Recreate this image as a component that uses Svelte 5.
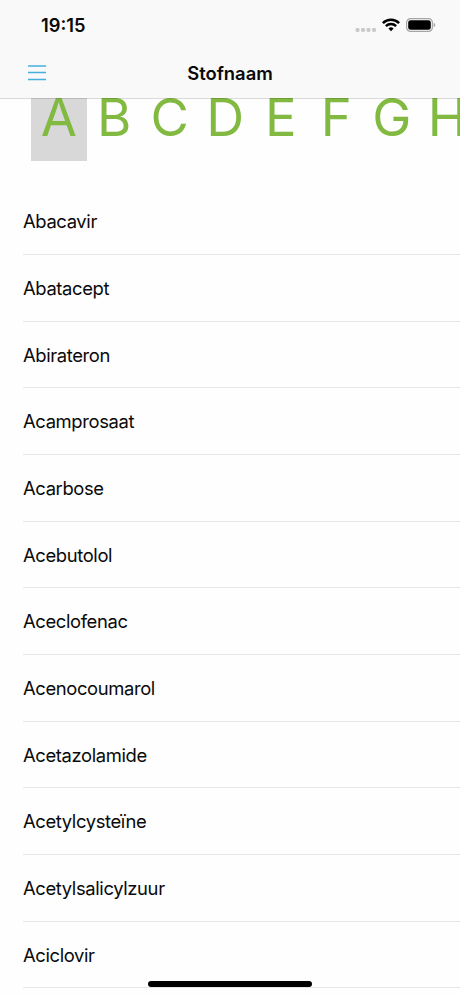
<script lang="ts">
  const letters = ["A", "B", "C", "D", "E", "F", "G", "H"];

  const substances = [
    "Abacavir",
    "Abatacept",
    "Abirateron",
    "Acamprosaat",
    "Acarbose",
    "Acebutolol",
    "Aceclofenac",
    "Acenocoumarol",
    "Acetazolamide",
    "Acetylcysteïne",
    "Acetylsalicylzuur",
    "Aciclovir",
  ];

  let selected = $state("A");
</script>

<div class="screen">
  <header>
    <div class="status">
      <span class="time">19:15</span>
      <div class="indicators">
        <svg class="dots" width="22" height="6" viewBox="0 0 22 6">
          <g fill="#cacaca">
            <rect x="0.5" y="1" width="4" height="4" rx="1.4" />
            <rect x="6" y="1" width="4" height="4" rx="1.4" />
            <rect x="11.5" y="1" width="4" height="4" rx="1.4" />
            <rect x="17" y="1" width="4" height="4" rx="1.4" />
          </g>
        </svg>
        <svg class="wifi" width="18" height="14" viewBox="0 0 18 14">
          <g fill="none" stroke="#000" stroke-width="2.5">
            <path d="M0.9 5.1a11.6 11.6 0 0 1 16.2 0" />
            <path d="M3.9 8.2a7.3 7.3 0 0 1 10.2 0" />
          </g>
          <path
            d="M9 13.2 6.4 10.6a3.7 3.7 0 0 1 5.2 0z"
            fill="#000"
          />
        </svg>
        <svg class="battery" width="30" height="14" viewBox="0 0 30 14">
          <rect
            x="0.6"
            y="0.6"
            width="25.8"
            height="12.8"
            rx="4"
            fill="none"
            stroke="#a6a6a6"
            stroke-width="1.2"
          />
          <rect x="2.2" y="2.2" width="22.6" height="9.6" rx="2.4" fill="#000" />
          <path d="M27.7 4.8c2.1 0.8 2.1 3.6 0 4.4z" fill="#a6a6a6" />
        </svg>
      </div>
    </div>
    <nav>
      <button type="button" class="menu" aria-label="Menu">
        <svg width="18" height="17" viewBox="0 0 18 17">
          <path
            d="M0 1h18M0 7.5h18M0 14.5h18"
            stroke="#45b0de"
            stroke-width="1.3"
          />
        </svg>
      </button>
      <h1>Stofnaam</h1>
    </nav>
  </header>

  <div class="letters">
    {#each letters as letter}
      <button
        type="button"
        class="letter"
        class:selected={letter === selected}
        onclick={() => (selected = letter)}>{letter}</button
      >
    {/each}
  </div>

  <ul>
    {#each substances as substance}
      <li>{substance}</li>
    {/each}
  </ul>

  <div class="home"></div>
</div>

<style>
  :global(body) {
    background: #fefefe;
  }

  .screen {
    position: relative;
    display: flex;
    flex-direction: column;
    box-sizing: border-box;
    width: 460px;
    height: 996px;
    overflow: hidden;
    background: #fefefe;
    color: #0a0a0a;
    font-family: Inter, "Liberation Sans", sans-serif;
  }

  header {
    position: relative;
    z-index: 1;
    flex: none;
    box-sizing: border-box;
    height: 99px;
    background: #f9f9f9;
    background-clip: padding-box;
    border-bottom: 1px solid rgba(0, 0, 0, 0.14);
  }

  .status {
    display: flex;
    justify-content: space-between;
    height: 49px;
    padding: 0 24px 0 41px;
  }

  .time {
    font-size: 18.3px;
    font-weight: 600;
    line-height: 50px;
  }

  .indicators {
    display: flex;
    padding-top: 18px;
  }

  .dots {
    margin: 9px 5px 0 0;
  }

  .wifi {
    margin-right: 6px;
  }

  nav {
    display: grid;
    grid-template-columns: 1fr auto 1fr;
    align-items: center;
    height: 49px;
  }

  button {
    padding: 0;
    border: none;
    background: none;
    font-family: inherit;
    cursor: pointer;
  }

  .menu {
    justify-self: start;
    height: 17px;
    margin-left: 28px;
  }

  .menu svg {
    display: block;
  }

  h1 {
    margin: 0;
    font-size: 18.4px;
    font-weight: 600;
    line-height: 49px;
  }

  .letters {
    display: flex;
    flex: none;
    height: 88px;
    margin-top: -26px;
    padding-left: 31px;
  }

  .letter {
    flex: none;
    width: 55.5px;
    height: 88px;
    color: #82b941;
    font-size: 52.5px;
    font-weight: 400;
    line-height: 88px;
  }

  .letter.selected {
    background: #d8d8d8;
  }

  ul {
    flex: none;
    margin: 27.4px 0 0 23px;
    padding: 0;
    list-style: none;
  }

  li {
    box-sizing: border-box;
    height: 66.667px;
    border-bottom: 1px solid #e6e6e6;
    font-size: 18.4px;
    letter-spacing: -0.37px;
    line-height: 66.6px;
  }

  .home {
    position: absolute;
    bottom: 9px;
    left: 148px;
    width: 164px;
    height: 6px;
    border-radius: 3px;
    background: #000;
  }
</style>
